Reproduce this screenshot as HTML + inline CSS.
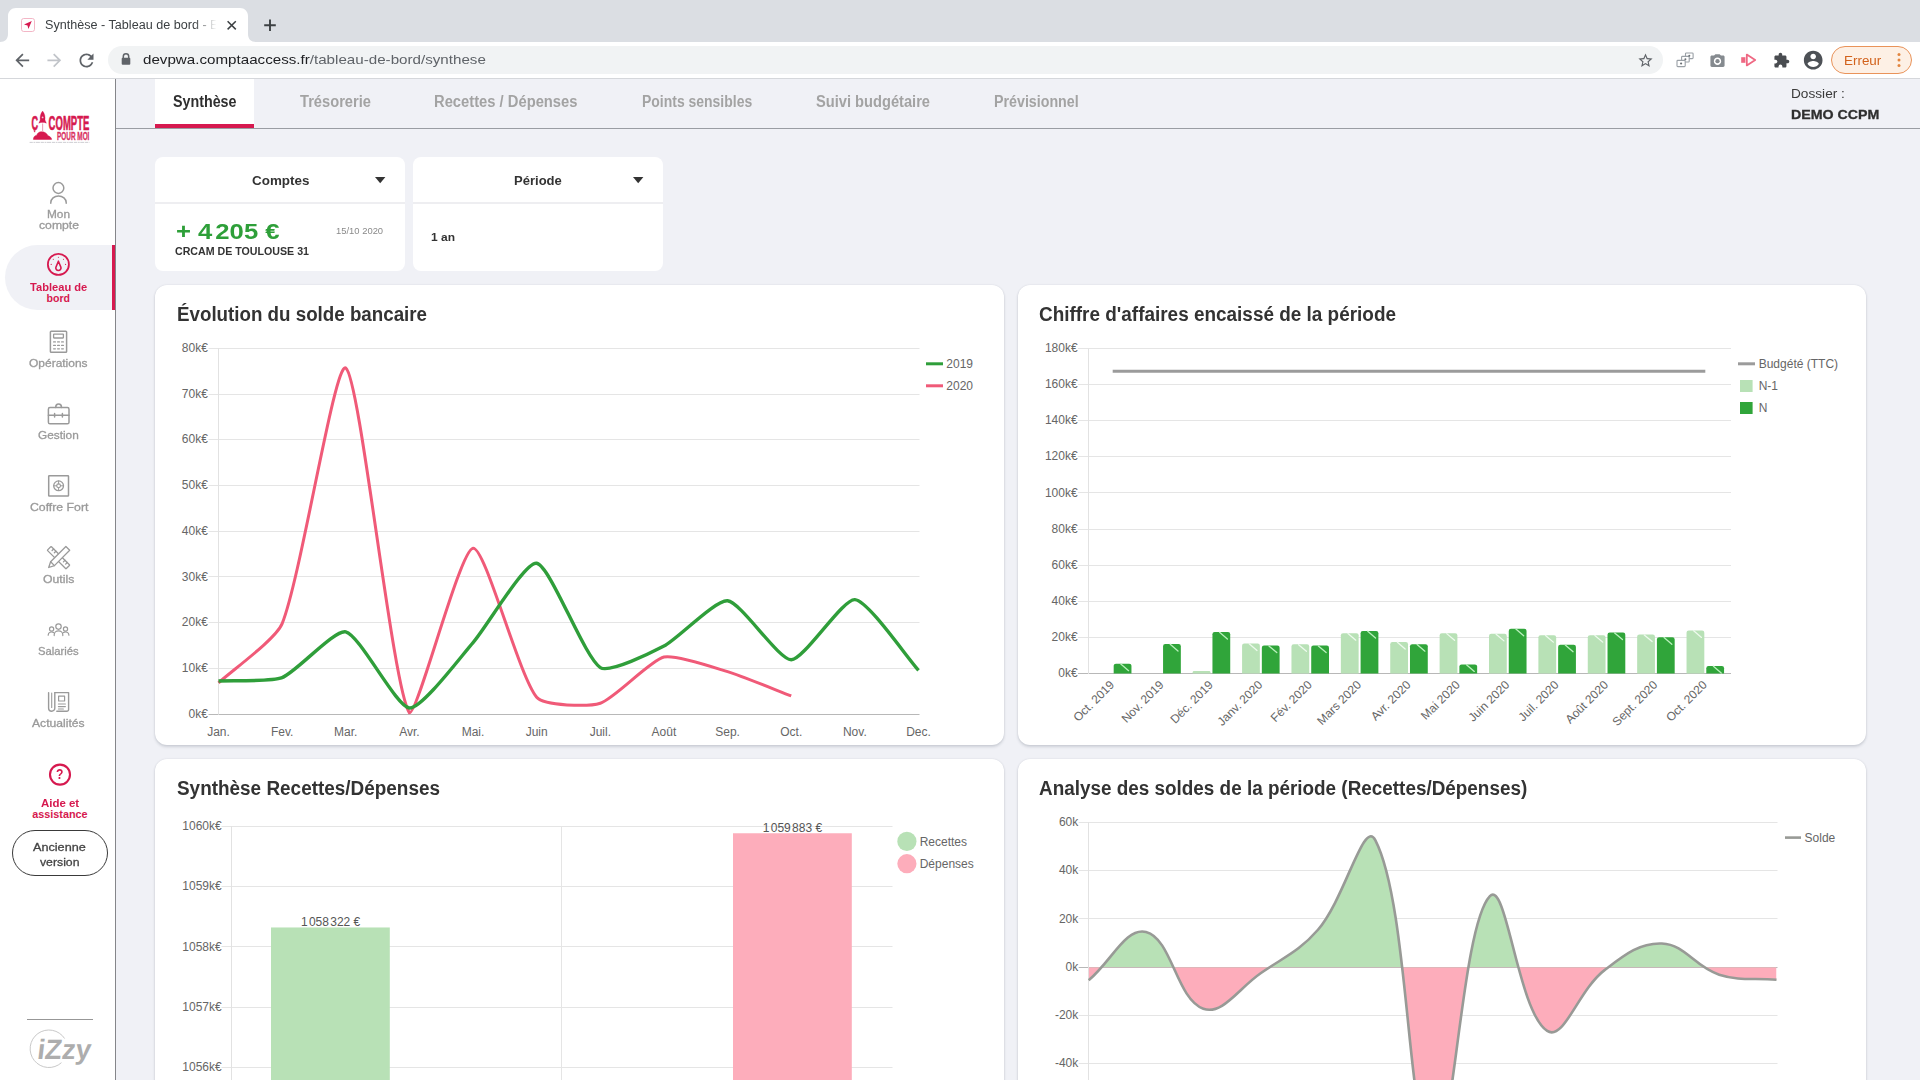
<!DOCTYPE html>
<html lang="fr"><head><meta charset="utf-8"><title>Synthèse - Tableau de bord</title>
<style>
*{box-sizing:border-box}
html,body{margin:0;padding:0}
body{width:1920px;height:1080px;overflow:hidden;position:relative;background:#f0f1f6;font-family:"Liberation Sans",sans-serif;color:#333}
.t{position:absolute;white-space:pre;transform-origin:0 50%}
.abs{position:absolute}
svg{position:absolute;overflow:visible}
.card{position:absolute;background:#fff;border-radius:12px;box-shadow:0 2px 3px rgba(40,50,70,.16),0 0 2px rgba(40,50,70,.12)}
.fcard{position:absolute;background:#fff;border-radius:8px}
</style></head>
<body>
<div class="abs" id="tabstrip" style="left:0;top:0;width:1920px;height:42px;background:#dbdee3"></div>
<div class="abs" id="toolbar" style="left:0;top:42px;width:1920px;height:36px;background:#fff"></div>
<div class="abs" style="left:0;top:78px;width:1920px;height:1px;background:#d5d7db"></div>
<svg style="left:0;top:0" width="260" height="42" viewBox="0 0 260 42"><path d="M0 42 C5 42 8 39 8 34 L8 16 C8 11.5 11.5 8 16 8 L240 8 C244.5 8 248 11.5 248 16 L248 34 C248 39 251 42 256 42 Z" fill="#fff"/></svg>
<svg style="left:21px;top:18px" width="14" height="14" viewBox="0 0 14 14"><rect x="0.5" y="0.5" width="13" height="13" rx="2.2" fill="#fff" stroke="#f3b6c6" stroke-width="1"/><path d="M10.8 3 L3 6.6 L6.5 7.4 L7.4 11 Z" fill="#d6194f"/></svg>
<div class="t" style="left:44.70px;top:17.04px;font-size:12px;line-height:16px;color:#3c4043;transform:scaleX(1.0501);-webkit-mask-image:linear-gradient(90deg,#000 86%,transparent 99%);mask-image:linear-gradient(90deg,#000 86%,transparent 99%);">Synthèse - Tableau de bord - E</div>
<svg style="left:0;top:0" width="300" height="42" viewBox="0 0 300 42"><path d="M227.6 21.2 L235.8 29.4 M235.8 21.2 L227.6 29.4" stroke="#3c4043" stroke-width="1.5" fill="none"/><path d="M264.2 25.2 H275.8 M270 19.4 V31" stroke="#3c4043" stroke-width="1.9" fill="none"/></svg>
<svg style="left:11.60px;top:49.70px" width="20.6" height="20.6" viewBox="0 0 24 24"><path d="M20 11H7.83l5.59-5.59L12 4l-8 8 8 8 1.41-1.41L7.83 13H20v-2z" fill="#5f6368"/></svg>
<svg style="left:43.90px;top:49.70px" width="20.6" height="20.6" viewBox="0 0 24 24"><path d="M12 4l-1.41 1.41L16.17 11H4v2h12.17l-5.58 5.59L12 20l8-8z" fill="#c1c4c9"/></svg>
<svg style="left:75.50px;top:49.50px" width="21" height="21" viewBox="0 0 24 24"><path d="M17.65 6.35C16.2 4.9 14.21 4 12 4c-4.42 0-7.99 3.58-7.99 8s3.57 8 7.99 8c3.73 0 6.84-2.55 7.73-6h-2.08c-.82 2.33-3.04 4-5.65 4-3.31 0-6-2.69-6-6s2.69-6 6-6c1.66 0 3.14.69 4.22 1.78L13 11h7V4l-2.35 2.35z" fill="#5f6368"/></svg>
<div class="abs" style="left:108px;top:46px;width:1555px;height:28px;border-radius:14px;background:#f1f3f4"></div>
<svg style="left:120px;top:52px" width="12" height="14" viewBox="0 0 12 14"><path d="M3.3 6 V4.4 A2.7 2.7 0 0 1 8.7 4.4 V6" fill="none" stroke="#5f6368" stroke-width="1.5"/><rect x="1.7" y="5.8" width="8.6" height="6.9" rx="1" fill="#5f6368"/></svg>
<div class="t" style="left:142.5px;top:50.12px;font-size:13.5px;line-height:19px;color:#202124;transform:scaleX(1.1224)">devpwa.comptaaccess.fr<span style="color:#5f6368">/tableau-de-bord/synthese</span></div>
<svg style="left:1636.50px;top:52.00px" width="17" height="17" viewBox="0 0 24 24"><path d="M22 9.24l-7.19-.62L12 2 9.19 8.63 2 9.24l5.46 4.73L5.82 21 12 17.27 18.18 21l-1.63-7.03L22 9.24zM12 15.4l-3.76 2.27 1-4.28-3.32-2.88 4.38-.38L12 6.1l1.71 4.04 4.38.38-3.32 2.88 1 4.28L12 15.4z" fill="#5f6368"/></svg>
<svg style="left:1676px;top:52px" width="18" height="17" viewBox="0 0 18 17"><g fill="#fff" stroke="#9aa0a6" stroke-width="1.1"><rect x="9.5" y="1" width="7.6" height="5.6" rx=".8"/><rect x="5.6" y="4.4" width="7.6" height="5.6" rx=".8"/><rect x="1" y="8.4" width="8.2" height="6.2" rx=".8"/></g><g fill="#6b7075"><circle cx="13.3" cy="3.8" r="1"/><circle cx="9.4" cy="7.2" r="1"/><circle cx="5.1" cy="11.5" r="1.1"/></g></svg>
<svg style="left:1708.5px;top:51.5px" width="17" height="17" viewBox="0 0 24 24"><path fill="#858a8f" d="M9 3L7.17 5H4c-1.1 0-2 .9-2 2v12c0 1.1.9 2 2 2h16c1.1 0 2-.9 2-2V7c0-1.1-.9-2-2-2h-3.17L15 3H9zm3 15.2c-2.87 0-5.2-2.33-5.2-5.2S9.13 7.8 12 7.8s5.200 2.330 5.200 5.200-2.330 5.200-5.200 5.200z"/><circle cx="12" cy="13" r="3" fill="#858a8f"/></svg>
<svg style="left:1740px;top:52px" width="18" height="16" viewBox="0 0 18 16"><rect x="1.2" y="5.2" width="4.2" height="5.6" fill="#ef6883"/><path d="M6.8 2.6 L15.2 8 L6.8 13.400 Z" fill="none" stroke="#ef6883" stroke-width="1.8" stroke-linejoin="round"/></svg>
<svg style="left:1772.50px;top:51.80px" width="17" height="17" viewBox="0 0 24 24"><path d="M20.5 11H19V7c0-1.1-.9-2-2-2h-4V3.500C13 2.120 11.880 1 10.500 1S8 2.120 8 3.500V5H4c-1.1 0-1.990.9-1.990 2v3.800H3.500c1.490 0 2.700 1.210 2.700 2.700s-1.210 2.700-2.700 2.700H2V20c0 1.100.9 2 2 2h3.800v-1.500c0-1.490 1.210-2.700 2.700-2.700 1.490 0 2.700 1.210 2.700 2.700V22H17c1.100 0 2-.9 2-2v-4h1.500c1.380 0 2.500-1.120 2.500-2.500S21.880 11 20.500 11z" fill="#494c50"/></svg>
<svg style="left:1801.80px;top:49.10px" width="22.4" height="22.4" viewBox="0 0 24 24"><path d="M12 2C6.48 2 2 6.48 2 12s4.48 10 10 10 10-4.48 10-10S17.52 2 12 2zm0 3c1.66 0 3 1.34 3 3s-1.34 3-3 3-3-1.34-3-3 1.34-3 3-3zm0 14.2c-2.5 0-4.71-1.28-6-3.22.03-1.99 4-3.08 6-3.08 1.99 0 5.97 1.09 6 3.08-1.29 1.94-3.500 3.220-6 3.220z" fill="#4d5156"/></svg>
<div class="abs" style="left:1831px;top:46px;width:81px;height:28px;border-radius:14px;background:#fdf0e5;border:1px solid #e9935a"></div>
<div class="t" style="left:1844.00px;top:52.00px;font-size:13px;line-height:17px;color:#d2621c;transform:scaleX(1.0326);">Erreur</div>
<svg style="left:1896px;top:51px" width="6" height="18" viewBox="0 0 6 18"><g fill="#e2853f"><circle cx="3" cy="3.4" r="1.5"/><circle cx="3" cy="9" r="1.5"/><circle cx="3" cy="14.6" r="1.5"/></g></svg>
<div class="abs" id="sidebar" style="left:0;top:79px;width:116px;height:1001px;background:#fff;border-right:1px solid #85868a"></div>
<div class="abs" style="left:5px;top:245px;width:110px;height:65px;border-radius:32.5px 0 0 32.5px;background:#f0f1f6"></div>
<div class="abs" style="left:112px;top:245px;width:3.4px;height:65px;background:#d6194f"></div>
<svg style="left:0;top:0" width="116" height="1080" viewBox="0 0 116 1080"><g fill="none" stroke="#9a9a9a" stroke-width="1.5" stroke-linecap="round" stroke-linejoin="round"><circle cx="58.4" cy="188" r="5.4"/><path d="M50.8 203.2 V202.6 A7.7 6.6 0 0 1 66.2 202.6 V203.2"/><rect x="50.4" y="331.2" width="16.2" height="21" rx="0.8"/><rect x="53.6" y="334.2" width="9.8" height="3.8" rx="0.4" stroke-width="1.3"/><path d="M53.6 341.9 h1.8" stroke-width="1.3"/><path d="M57.6 341.9 h1.8" stroke-width="1.3"/><path d="M61.6 341.9 h1.8" stroke-width="1.3"/><path d="M53.6 345.4 h1.8" stroke-width="1.3"/><path d="M57.6 345.4 h1.8" stroke-width="1.3"/><path d="M61.6 345.4 h1.8" stroke-width="1.3"/><path d="M53.6 348.8 h1.8" stroke-width="1.3"/><path d="M57.6 348.8 h1.8" stroke-width="1.3"/><path d="M61.6 348.8 h1.8" stroke-width="1.3"/><rect x="48.4" y="407.6" width="20.6" height="16.2" rx="1.6"/><path d="M55.7 407.4 A2.9 3.3 0 0 1 61.5 407.4"/><path d="M48.4 415.2 H69"/><path d="M54.6 413.4 V417 M62.4 413.4 V417"/><rect x="48.7" y="475.7" width="19.8" height="20.4" rx="0.6"/><circle cx="58.6" cy="485.8" r="4.9" stroke-width="1.3"/><circle cx="58.6" cy="485.8" r="1.9" stroke-width="1.1"/><path d="M58.6 481 v2.9 M58.6 487.7 v2.9 M53.8 485.8 h2.9 M60.5 485.8 h2.9" stroke-width="1"/><g transform="rotate(45 58.6 557.6)" stroke-width="1.3"><rect x="45.4" y="555" width="26.4" height="5.4" rx="0.5"/><path d="M49 555 v2.2 M52.2 555 v2.2 M65 555 v2.2 M68.2 555 v2.2"/></g><g transform="rotate(-45 58.6 557.6)" stroke-width="1.3"><path d="M50 554.9 H71.6 V560.3 H50 L44.6 557.6 Z" fill="#fff"/><path d="M50 554.9 V560.3"/></g><g stroke-width="1.2"><circle cx="58.5" cy="626.6" r="2.7"/><path d="M54.2 635.6 V634.8 A4.3 4 0 0 1 62.800 634.8 V635.6"/><circle cx="51.6" cy="628.9" r="2.1"/><path d="M48.2 635.2 V634.9 A3.3 3 0 0 1 53.6 632.6"/><circle cx="65.5" cy="628.9" r="2.1"/><path d="M68.9 635.2 V634.9 A3.3 3 0 0 0 63.500 632.6"/></g><g stroke-width="1.4"><path d="M54.8 692.6 H68.6 V709.4 A1.8 1.8 0 0 1 66.8 711.2 H56.8"/><path d="M48.6 692.6 V708.2 A3.1 3 0 0 0 54.8 708.2 V692.6" /><path d="M51.7 693 V707.4" stroke-width="1.1"/><rect x="58.6" y="696.2" width="6" height="4.8" stroke-width="1.2"/><path d="M58.4 704 H65.4 M58.4 706.6 H65.4 M58.4 709 H63.4" stroke-width="1.1"/></g></g><g fill="none" stroke="#d6194f" stroke-linecap="round" stroke-linejoin="round"><circle cx="58.4" cy="264.4" r="10.5" stroke-width="1.8"/><path d="M58.4 261.2 L60.9 267.2 A2.6 2.6 0 1 1 55.9 267.2 Z" stroke-width="1.6"/><circle cx="51.20" cy="264.40" r="0.55" fill="#d6194f" stroke="none"/><circle cx="53.31" cy="259.31" r="0.55" fill="#d6194f" stroke="none"/><circle cx="58.40" cy="257.20" r="0.55" fill="#d6194f" stroke="none"/><circle cx="63.49" cy="259.31" r="0.55" fill="#d6194f" stroke="none"/><circle cx="65.60" cy="264.40" r="0.55" fill="#d6194f" stroke="none"/></g><circle cx="60" cy="774.6" r="10" fill="none" stroke="#d6194f" stroke-width="2.1"/></svg>
<div class="t" style="left:56.30px;top:765.25px;font-size:14px;line-height:19px;color:#d6194f;font-weight:bold;transform:scaleX(0.8653);">?</div>
<div class="t" style="left:47.10px;top:207.09px;font-size:11px;line-height:15px;color:#9a9a9a;transform:scaleX(1.0748);-webkit-text-stroke:0.3px #9a9a9a;">Mon</div>
<div class="t" style="left:38.60px;top:217.99px;font-size:11px;line-height:15px;color:#9a9a9a;transform:scaleX(1.1089);-webkit-text-stroke:0.3px #9a9a9a;">compte</div>
<div class="t" style="left:29.85px;top:279.63px;font-size:10.6px;line-height:14px;color:#d6194f;font-weight:bold;transform:scaleX(1.0497);">Tableau de</div>
<div class="t" style="left:46.55px;top:290.73px;font-size:10.6px;line-height:14px;color:#d6194f;font-weight:bold;">bord</div>
<div class="t" style="left:29.40px;top:356.29px;font-size:11px;line-height:15px;color:#9a9a9a;transform:scaleX(1.0890);-webkit-text-stroke:0.3px #9a9a9a;">Opérations</div>
<div class="t" style="left:38.25px;top:428.09px;font-size:11px;line-height:15px;color:#9a9a9a;transform:scaleX(1.0736);-webkit-text-stroke:0.3px #9a9a9a;">Gestion</div>
<div class="t" style="left:29.60px;top:500.29px;font-size:11px;line-height:15px;color:#9a9a9a;transform:scaleX(1.1152);-webkit-text-stroke:0.3px #9a9a9a;">Coffre Fort</div>
<div class="t" style="left:42.85px;top:571.89px;font-size:11px;line-height:15px;color:#9a9a9a;transform:scaleX(1.1132);-webkit-text-stroke:0.3px #9a9a9a;">Outils</div>
<div class="t" style="left:38.25px;top:644.09px;font-size:11px;line-height:15px;color:#9a9a9a;transform:scaleX(1.0241);-webkit-text-stroke:0.3px #9a9a9a;">Salariés</div>
<div class="t" style="left:32.40px;top:716.09px;font-size:11px;line-height:15px;color:#9a9a9a;transform:scaleX(1.1029);-webkit-text-stroke:0.3px #9a9a9a;">Actualités</div>
<div class="t" style="left:40.80px;top:796.26px;font-size:10.8px;line-height:15px;color:#d6194f;font-weight:bold;transform:scaleX(1.0609);">Aide et</div>
<div class="t" style="left:32.35px;top:807.26px;font-size:10.8px;line-height:15px;color:#d6194f;font-weight:bold;">assistance</div>
<div class="abs" style="left:12px;top:830px;width:96px;height:46px;border-radius:23px;border:1px solid #3a3a3a;background:#fff"></div>
<div class="t" style="left:33.40px;top:838.61px;font-size:11.8px;line-height:16px;color:#444;transform:scaleX(1.0730);-webkit-text-stroke:0.3px #444;">Ancienne</div>
<div class="t" style="left:40.15px;top:853.51px;font-size:11.8px;line-height:16px;color:#444;transform:scaleX(1.0384);-webkit-text-stroke:0.3px #444;">version</div>
<div class="abs" style="left:27px;top:1019px;width:66px;height:1px;background:#979797"></div>
<svg style="left:0;top:0" width="116" height="160" viewBox="0 0 116 160"><g fill="#d6194f" stroke="#d6194f" stroke-width="0.55" stroke-linejoin="round"><text x="31.6" y="130" font-family="Liberation Sans" font-weight="bold" font-size="19.5" textLength="6.6" lengthAdjust="spacingAndGlyphs">C</text><path d="M33.8 130.6 l1.4 0 l-0.5 1.6 z"/><text x="48.6" y="129.8" font-family="Liberation Sans" font-weight="bold" font-size="19.3" textLength="40.8" lengthAdjust="spacingAndGlyphs">COMPTE</text><text x="57" y="139.8" font-family="Liberation Sans" font-weight="bold" font-size="11.4" textLength="32.4" lengthAdjust="spacingAndGlyphs" fill="#d92f60" stroke="#d92f60" stroke-width="0.3">POUR MOI</text><path d="M42.6 111 C44.8 113.6 45.4 117 45 120 L46.4 123.2 L44.2 122.4 L41 122.4 L38.8 123.2 L40.200 120 C39.800 117 40.400 113.600 42.600 111 Z" stroke-width="0.3"/><circle cx="42.6" cy="117.4" r="0.9" fill="#f4c4d1" stroke="none"/><path d="M33.400 139.400 C33.400 137 35 135.400 36.800 135.200 C37.400 133 39.400 131.600 41.600 131.800 C44.400 131.600 47 133.400 48 135.800 C50 136.400 51.600 137.800 51.600 139.400 Z"/></g><path d="M42.6 123.6 V131.6" stroke="#e9a5b8" stroke-width="1.1"/><path d="M29.6 142.4 H89.4" stroke="#c3c3c8" stroke-width="0.8" stroke-dasharray="3.2 0.7 1.8 0.6 4 0.8"/></svg>
<svg style="left:0;top:1020px" width="116" height="60" viewBox="0 1020 116 60"><path d="M64.62 1038.54 A18.75 18.75 0 1 0 61.45 1062.68" fill="none" stroke="#c2c2c2" stroke-width="0.9"/><text x="36.4" y="1058.8" font-family="Liberation Sans" font-weight="bold" font-size="28" transform="skewX(-7) translate(130 0)" textLength="53.6" lengthAdjust="spacingAndGlyphs" fill="#adadad">iZzy</text></svg>
<div class="abs" id="topnav" style="left:116px;top:79px;width:1804px;height:50px;border-bottom:1px solid #9a9da3"></div>
<div class="abs" style="left:155px;top:79px;width:99px;height:45px;background:#fff"></div>
<div class="abs" style="left:155px;top:124px;width:99px;height:4.4px;background:#d6194f"></div>
<div class="t" style="left:172.50px;top:91.23px;font-size:15.8px;line-height:21px;color:#2f2f2f;font-weight:bold;transform:scaleX(0.9039);">Synthèse</div>
<div class="t" style="left:299.50px;top:91.23px;font-size:15.8px;line-height:21px;color:#a3a3a3;font-weight:bold;transform:scaleX(0.9291);">Trésorerie</div>
<div class="t" style="left:434.00px;top:91.23px;font-size:15.8px;line-height:21px;color:#a3a3a3;font-weight:bold;transform:scaleX(0.9337);">Recettes / Dépenses</div>
<div class="t" style="left:641.80px;top:91.23px;font-size:15.8px;line-height:21px;color:#a3a3a3;font-weight:bold;transform:scaleX(0.8838);">Points sensibles</div>
<div class="t" style="left:816.00px;top:91.23px;font-size:15.8px;line-height:21px;color:#a3a3a3;font-weight:bold;transform:scaleX(0.9275);">Suivi budgétaire</div>
<div class="t" style="left:994.00px;top:91.23px;font-size:15.8px;line-height:21px;color:#a3a3a3;font-weight:bold;transform:scaleX(0.9014);">Prévisionnel</div>
<div class="t" style="left:1790.80px;top:85.16px;font-size:13.4px;line-height:18px;color:#3a3a3a;transform:scaleX(1.0195);">Dossier :</div>
<div class="t" style="left:1790.80px;top:105.96px;font-size:12.8px;line-height:17px;color:#2f2f2f;font-weight:bold;transform:scaleX(1.1099);-webkit-text-stroke:0.3px #2f2f2f;">DEMO CCPM</div>
<div class="fcard" style="left:155px;top:156.5px;width:250px;height:114.5px"></div>
<div class="abs" style="left:155px;top:202.2px;width:250px;height:2px;background:#eeeef1"></div>
<div class="t" style="left:251.50px;top:171.66px;font-size:12.8px;line-height:17px;color:#333;font-weight:bold;transform:scaleX(1.0481);">Comptes</div>
<svg style="left:374.8px;top:177px" width="10.4" height="6.2" viewBox="0 0 10.4 6.2"><path d="M0 0 H10.4 L5.2 6.2 Z" fill="#333"/></svg>
<div class="t" style="left:175.7px;top:216.54px;font-size:22.4px;line-height:30px;color:#2e9f39;font-weight:bold;transform:scaleX(1.1458)">+ 4<span style="display:inline-block;width:2.6px"></span>205 €</div>
<div class="t" style="left:336.30px;top:225.08px;font-size:9px;line-height:12px;color:#8a8a8a;transform:scaleX(1.0456);">15/10 2020</div>
<div class="t" style="left:175.30px;top:245.03px;font-size:10.3px;line-height:14px;color:#333;font-weight:bold;transform:scaleX(1.0330);">CRCAM DE TOULOUSE 31</div>
<div class="fcard" style="left:413px;top:156.5px;width:250px;height:114.5px"></div>
<div class="abs" style="left:413px;top:202.2px;width:250px;height:2px;background:#eeeef1"></div>
<div class="t" style="left:513.90px;top:171.66px;font-size:12.8px;line-height:17px;color:#333;font-weight:bold;transform:scaleX(1.0181);">Période</div>
<svg style="left:632.6px;top:177px" width="10.4" height="6.2" viewBox="0 0 10.4 6.2"><path d="M0 0 H10.4 L5.2 6.2 Z" fill="#333"/></svg>
<div class="t" style="left:430.90px;top:228.78px;font-size:11.6px;line-height:16px;color:#333;font-weight:bold;transform:scaleX(1.0340);">1 an</div>
<div class="card" style="left:155px;top:285px;width:849px;height:460px"></div>
<div class="card" style="left:1018px;top:285px;width:848px;height:460px"></div>
<div class="card" style="left:155px;top:758.5px;width:849px;height:460px"></div>
<div class="card" style="left:1018px;top:758.5px;width:848px;height:460px"></div>
<div class="t" style="left:176.70px;top:301.17px;font-size:20px;line-height:26px;color:#333;font-weight:bold;transform:scaleX(0.9373);">Évolution du solde bancaire</div>
<div class="t" style="left:1039.20px;top:301.17px;font-size:20px;line-height:26px;color:#333;font-weight:bold;transform:scaleX(0.9466);">Chiffre d'affaires encaissé de la période</div>
<div class="t" style="left:176.50px;top:775.27px;font-size:20px;line-height:26px;color:#333;font-weight:bold;transform:scaleX(0.9463);">Synthèse Recettes/Dépenses</div>
<div class="t" style="left:1039.00px;top:775.27px;font-size:20px;line-height:26px;color:#333;font-weight:bold;transform:scaleX(0.9445);">Analyse des soldes de la période (Recettes/Dépenses)</div>
<svg id="charts" style="left:0;top:0" width="1920" height="1080" viewBox="0 0 1920 1080" font-family="Liberation Sans, sans-serif"><path d="M208.50 348.50 H919.50" stroke="#e5e5e5" stroke-width="1"/><text x="207.90" y="351.90" text-anchor="end" font-size="12" fill="#666" >80k€</text><path d="M208.50 394.50 H919.50" stroke="#e5e5e5" stroke-width="1"/><text x="207.90" y="397.64" text-anchor="end" font-size="12" fill="#666" >70k€</text><path d="M208.50 439.50 H919.50" stroke="#e5e5e5" stroke-width="1"/><text x="207.90" y="443.38" text-anchor="end" font-size="12" fill="#666" >60k€</text><path d="M208.50 485.50 H919.50" stroke="#e5e5e5" stroke-width="1"/><text x="207.90" y="489.11" text-anchor="end" font-size="12" fill="#666" >50k€</text><path d="M208.50 531.50 H919.50" stroke="#e5e5e5" stroke-width="1"/><text x="207.90" y="534.85" text-anchor="end" font-size="12" fill="#666" >40k€</text><path d="M208.50 576.50 H919.50" stroke="#e5e5e5" stroke-width="1"/><text x="207.90" y="580.59" text-anchor="end" font-size="12" fill="#666" >30k€</text><path d="M208.50 622.50 H919.50" stroke="#e5e5e5" stroke-width="1"/><text x="207.90" y="626.33" text-anchor="end" font-size="12" fill="#666" >20k€</text><path d="M208.50 668.50 H919.50" stroke="#e5e5e5" stroke-width="1"/><text x="207.90" y="672.06" text-anchor="end" font-size="12" fill="#666" >10k€</text><path d="M208.50 714.50 H919.50" stroke="#b8b8b8" stroke-width="1"/><text x="207.90" y="717.80" text-anchor="end" font-size="12" fill="#666" >0k€</text><path d="M218.50 348.30 V714.70" stroke="#e2e2e2" stroke-width="1"/><text x="218.50" y="736.00" text-anchor="middle" font-size="12" fill="#666" >Jan.</text><text x="282.14" y="736.00" text-anchor="middle" font-size="12" fill="#666" >Fev.</text><text x="345.77" y="736.00" text-anchor="middle" font-size="12" fill="#666" >Mar.</text><text x="409.41" y="736.00" text-anchor="middle" font-size="12" fill="#666" >Avr.</text><text x="473.05" y="736.00" text-anchor="middle" font-size="12" fill="#666" >Mai.</text><text x="536.68" y="736.00" text-anchor="middle" font-size="12" fill="#666" >Juin</text><text x="600.32" y="736.00" text-anchor="middle" font-size="12" fill="#666" >Juil.</text><text x="663.95" y="736.00" text-anchor="middle" font-size="12" fill="#666" >Août</text><text x="727.59" y="736.00" text-anchor="middle" font-size="12" fill="#666" >Sep.</text><text x="791.23" y="736.00" text-anchor="middle" font-size="12" fill="#666" >Oct.</text><text x="854.86" y="736.00" text-anchor="middle" font-size="12" fill="#666" >Nov.</text><text x="918.50" y="736.00" text-anchor="middle" font-size="12" fill="#666" >Dec.</text><path d="M218.50 682.87 C231.23 671.02 275.82 639.27 282.14 623.64 C301.28 576.28 334.85 360.31 345.77 367.97 C360.31 378.15 392.48 688.85 409.41 712.83 C417.93 714.20 459.78 549.79 473.05 548.17 C485.23 546.68 518.42 675.04 536.68 697.28 C543.88 706.05 588.91 706.83 600.32 703.22 C614.36 698.78 650.05 660.48 663.95 657.03 C675.50 654.16 715.13 667.86 727.59 671.66 C740.59 675.63 778.50 691.06 791.23 695.91" fill="none" stroke="#f05a78" stroke-width="3" stroke-linejoin="round"/><path d="M218.50 680.95 C231.23 680.28 270.72 682.01 282.14 677.61 C296.18 672.20 334.54 629.19 345.77 631.87 C360.00 635.27 396.15 706.91 409.41 708.03 C421.60 709.06 461.01 656.31 473.05 642.62 C486.46 627.36 525.12 561.00 536.68 563.27 C550.57 565.99 583.89 656.86 600.32 667.55 C609.35 673.42 652.19 652.23 663.95 646.05 C677.64 638.87 715.53 599.47 727.59 600.77 C740.99 602.22 778.56 659.89 791.23 659.77 C804.01 659.66 842.66 598.62 854.86 599.63 C868.12 600.72 905.77 656.16 918.50 670.29" fill="none" stroke="#2f9e3a" stroke-width="3.4" stroke-linejoin="round"/><path d="M926 363.8 H943" stroke="#2f9e3a" stroke-width="3"/><text x="946.30" y="368.00" text-anchor="start" font-size="12" fill="#666" >2019</text><path d="M926 385.8 H943" stroke="#f05a78" stroke-width="3"/><text x="946.30" y="390.00" text-anchor="start" font-size="12" fill="#666" >2020</text><path d="M1078.00 348.50 H1731.00" stroke="#e5e5e5" stroke-width="1"/><text x="1077.60" y="352.10" text-anchor="end" font-size="12" fill="#666" >180k€</text><path d="M1078.00 384.50 H1731.00" stroke="#e5e5e5" stroke-width="1"/><text x="1077.60" y="388.22" text-anchor="end" font-size="12" fill="#666" >160k€</text><path d="M1078.00 420.50 H1731.00" stroke="#e5e5e5" stroke-width="1"/><text x="1077.60" y="424.34" text-anchor="end" font-size="12" fill="#666" >140k€</text><path d="M1078.00 456.50 H1731.00" stroke="#e5e5e5" stroke-width="1"/><text x="1077.60" y="460.47" text-anchor="end" font-size="12" fill="#666" >120k€</text><path d="M1078.00 492.50 H1731.00" stroke="#e5e5e5" stroke-width="1"/><text x="1077.60" y="496.59" text-anchor="end" font-size="12" fill="#666" >100k€</text><path d="M1078.00 529.50 H1731.00" stroke="#e5e5e5" stroke-width="1"/><text x="1077.60" y="532.71" text-anchor="end" font-size="12" fill="#666" >80k€</text><path d="M1078.00 565.50 H1731.00" stroke="#e5e5e5" stroke-width="1"/><text x="1077.60" y="568.83" text-anchor="end" font-size="12" fill="#666" >60k€</text><path d="M1078.00 601.50 H1731.00" stroke="#e5e5e5" stroke-width="1"/><text x="1077.60" y="604.96" text-anchor="end" font-size="12" fill="#666" >40k€</text><path d="M1078.00 637.50 H1731.00" stroke="#e5e5e5" stroke-width="1"/><text x="1077.60" y="641.08" text-anchor="end" font-size="12" fill="#666" >20k€</text><path d="M1078.00 673.50 H1731.00" stroke="#b8b8b8" stroke-width="1"/><text x="1077.60" y="677.20" text-anchor="end" font-size="12" fill="#666" >0k€</text><path d="M1088.50 348.50 V674.10" stroke="#e2e2e2" stroke-width="1"/><path d="M1113.68 673.60 V665.87 Q1113.68 663.67 1115.88 663.67 H1129.26 Q1131.46 663.67 1131.46 665.87 V673.60 Z" fill="#30a53a"/><path d="M1120.79 663.97 L1128.61 670.67" stroke="#baf0bd" stroke-width="1.3" stroke-linecap="round"/><text transform="translate(1112.09 682.60) rotate(-45)" text-anchor="end" font-size="12" fill="#666" dy="4.2">Oct. 2019</text><path d="M1163.06 673.60 V646.18 Q1163.06 643.98 1165.26 643.98 H1178.64 Q1180.84 643.98 1180.84 646.18 V673.60 Z" fill="#30a53a"/><path d="M1170.18 644.28 L1178.00 650.98" stroke="#baf0bd" stroke-width="1.3" stroke-linecap="round"/><text transform="translate(1161.48 682.60) rotate(-45)" text-anchor="end" font-size="12" fill="#666" dy="4.2">Nov. 2019</text><path d="M1192.70 673.60 V672.34 Q1192.70 671.07 1193.96 671.07 H1209.21 Q1210.47 671.07 1210.47 672.34 V673.60 Z" fill="#b8e1b6"/><path d="M1212.45 673.60 V634.26 Q1212.45 632.06 1214.65 632.06 H1228.03 Q1230.23 632.06 1230.23 634.26 V673.60 Z" fill="#30a53a"/><path d="M1219.56 632.36 L1227.38 639.06" stroke="#baf0bd" stroke-width="1.3" stroke-linecap="round"/><text transform="translate(1210.86 682.60) rotate(-45)" text-anchor="end" font-size="12" fill="#666" dy="4.2">Déc. 2019</text><path d="M1242.08 673.60 V645.64 Q1242.08 643.44 1244.28 643.44 H1257.66 Q1259.86 643.44 1259.86 645.64 V673.60 Z" fill="#b8e1b6"/><path d="M1249.19 643.74 L1257.01 650.44" stroke="#eefaee" stroke-width="1.3" stroke-linecap="round"/><path d="M1261.83 673.60 V647.81 Q1261.83 645.61 1264.03 645.61 H1277.41 Q1279.61 645.61 1279.61 647.81 V673.60 Z" fill="#30a53a"/><path d="M1268.95 645.91 L1276.77 652.61" stroke="#baf0bd" stroke-width="1.3" stroke-linecap="round"/><text transform="translate(1260.25 682.60) rotate(-45)" text-anchor="end" font-size="12" fill="#666" dy="4.2">Janv. 2020</text><path d="M1291.46 673.60 V646.54 Q1291.46 644.34 1293.66 644.34 H1307.04 Q1309.24 644.34 1309.24 646.54 V673.60 Z" fill="#b8e1b6"/><path d="M1298.58 644.64 L1306.40 651.34" stroke="#eefaee" stroke-width="1.3" stroke-linecap="round"/><path d="M1311.22 673.60 V647.81 Q1311.22 645.61 1313.42 645.61 H1326.80 Q1329.00 645.61 1329.00 647.81 V673.60 Z" fill="#30a53a"/><path d="M1318.33 645.91 L1326.15 652.61" stroke="#baf0bd" stroke-width="1.3" stroke-linecap="round"/><text transform="translate(1309.63 682.60) rotate(-45)" text-anchor="end" font-size="12" fill="#666" dy="4.2">Fév. 2020</text><path d="M1340.85 673.60 V635.34 Q1340.85 633.14 1343.05 633.14 H1356.43 Q1358.63 633.14 1358.63 635.34 V673.60 Z" fill="#b8e1b6"/><path d="M1347.96 633.44 L1355.78 640.14" stroke="#eefaee" stroke-width="1.3" stroke-linecap="round"/><path d="M1360.60 673.60 V633.18 Q1360.60 630.98 1362.80 630.98 H1376.18 Q1378.38 630.98 1378.38 633.18 V673.60 Z" fill="#30a53a"/><path d="M1367.71 631.28 L1375.54 637.98" stroke="#baf0bd" stroke-width="1.3" stroke-linecap="round"/><text transform="translate(1359.02 682.60) rotate(-45)" text-anchor="end" font-size="12" fill="#666" dy="4.2">Mars 2020</text><path d="M1390.23 673.60 V644.19 Q1390.23 641.99 1392.43 641.99 H1405.81 Q1408.01 641.99 1408.01 644.19 V673.60 Z" fill="#b8e1b6"/><path d="M1397.35 642.29 L1405.17 648.99" stroke="#eefaee" stroke-width="1.3" stroke-linecap="round"/><path d="M1409.99 673.60 V646.36 Q1409.99 644.16 1412.19 644.16 H1425.57 Q1427.77 644.16 1427.77 646.36 V673.60 Z" fill="#30a53a"/><path d="M1417.10 644.46 L1424.92 651.16" stroke="#baf0bd" stroke-width="1.3" stroke-linecap="round"/><text transform="translate(1408.40 682.60) rotate(-45)" text-anchor="end" font-size="12" fill="#666" dy="4.2">Avr. 2020</text><path d="M1439.62 673.60 V635.52 Q1439.62 633.32 1441.82 633.32 H1455.20 Q1457.40 633.32 1457.40 635.52 V673.60 Z" fill="#b8e1b6"/><path d="M1446.73 633.62 L1454.55 640.32" stroke="#eefaee" stroke-width="1.3" stroke-linecap="round"/><path d="M1459.37 673.60 V666.59 Q1459.37 664.39 1461.57 664.39 H1474.95 Q1477.15 664.39 1477.15 666.59 V673.60 Z" fill="#30a53a"/><path d="M1466.48 664.69 L1474.31 671.39" stroke="#baf0bd" stroke-width="1.3" stroke-linecap="round"/><text transform="translate(1457.78 682.60) rotate(-45)" text-anchor="end" font-size="12" fill="#666" dy="4.2">Mai 2020</text><path d="M1489.00 673.60 V636.07 Q1489.00 633.87 1491.20 633.87 H1504.58 Q1506.78 633.87 1506.78 636.07 V673.60 Z" fill="#b8e1b6"/><path d="M1496.11 634.17 L1503.94 640.87" stroke="#eefaee" stroke-width="1.3" stroke-linecap="round"/><path d="M1508.76 673.60 V631.01 Q1508.76 628.81 1510.96 628.81 H1524.34 Q1526.54 628.81 1526.54 631.01 V673.60 Z" fill="#30a53a"/><path d="M1515.87 629.11 L1523.69 635.81" stroke="#baf0bd" stroke-width="1.3" stroke-linecap="round"/><text transform="translate(1507.17 682.60) rotate(-45)" text-anchor="end" font-size="12" fill="#666" dy="4.2">Juin 2020</text><path d="M1538.39 673.60 V637.33 Q1538.39 635.13 1540.59 635.13 H1553.97 Q1556.17 635.13 1556.17 637.33 V673.60 Z" fill="#b8e1b6"/><path d="M1545.50 635.43 L1553.32 642.13" stroke="#eefaee" stroke-width="1.3" stroke-linecap="round"/><path d="M1558.14 673.60 V646.90 Q1558.14 644.70 1560.34 644.70 H1573.72 Q1575.92 644.70 1575.92 646.90 V673.60 Z" fill="#30a53a"/><path d="M1565.25 645.00 L1573.08 651.70" stroke="#baf0bd" stroke-width="1.3" stroke-linecap="round"/><text transform="translate(1556.55 682.60) rotate(-45)" text-anchor="end" font-size="12" fill="#666" dy="4.2">Juil. 2020</text><path d="M1587.77 673.60 V637.33 Q1587.77 635.13 1589.97 635.13 H1603.35 Q1605.55 635.13 1605.55 637.33 V673.60 Z" fill="#b8e1b6"/><path d="M1594.88 635.43 L1602.71 642.13" stroke="#eefaee" stroke-width="1.3" stroke-linecap="round"/><path d="M1607.53 673.60 V634.80 Q1607.53 632.60 1609.73 632.60 H1623.10 Q1625.30 632.60 1625.30 634.80 V673.60 Z" fill="#30a53a"/><path d="M1614.64 632.90 L1622.46 639.60" stroke="#baf0bd" stroke-width="1.3" stroke-linecap="round"/><text transform="translate(1605.94 682.60) rotate(-45)" text-anchor="end" font-size="12" fill="#666" dy="4.2">Août 2020</text><path d="M1637.16 673.60 V636.79 Q1637.16 634.59 1639.36 634.59 H1652.74 Q1654.94 634.59 1654.94 636.79 V673.60 Z" fill="#b8e1b6"/><path d="M1644.27 634.89 L1652.09 641.59" stroke="#eefaee" stroke-width="1.3" stroke-linecap="round"/><path d="M1656.91 673.60 V639.50 Q1656.91 637.30 1659.11 637.30 H1672.49 Q1674.69 637.30 1674.69 639.50 V673.60 Z" fill="#30a53a"/><path d="M1664.02 637.60 L1671.84 644.30" stroke="#baf0bd" stroke-width="1.3" stroke-linecap="round"/><text transform="translate(1655.32 682.60) rotate(-45)" text-anchor="end" font-size="12" fill="#666" dy="4.2">Sept. 2020</text><path d="M1686.54 673.60 V632.63 Q1686.54 630.43 1688.74 630.43 H1702.12 Q1704.32 630.43 1704.32 632.63 V673.60 Z" fill="#b8e1b6"/><path d="M1693.65 630.73 L1701.48 637.43" stroke="#eefaee" stroke-width="1.3" stroke-linecap="round"/><path d="M1706.30 673.60 V668.21 Q1706.30 666.01 1708.50 666.01 H1721.87 Q1724.07 666.01 1724.07 668.21 V673.60 Z" fill="#30a53a"/><path d="M1713.41 666.31 L1721.23 673.01" stroke="#baf0bd" stroke-width="1.3" stroke-linecap="round"/><text transform="translate(1704.71 682.60) rotate(-45)" text-anchor="end" font-size="12" fill="#666" dy="4.2">Oct. 2020</text><path d="M1112.69 371.26 H1705.31" stroke="#9b9b9b" stroke-width="3"/><path d="M1738 363.8 H1755" stroke="#9b9b9b" stroke-width="3"/><text x="1758.70" y="368.00" text-anchor="start" font-size="12" fill="#666" >Budgété (TTC)</text><rect x="1740" y="380" width="12.6" height="12" fill="#b8e1b6"/><text x="1758.70" y="390.00" text-anchor="start" font-size="12" fill="#666" >N-1</text><rect x="1740" y="402" width="12.6" height="12" fill="#30a53a"/><text x="1758.70" y="412.00" text-anchor="start" font-size="12" fill="#666" >N</text><path d="M221.50 826.50 H892.50" stroke="#e5e5e5" stroke-width="1"/><text x="221.70" y="829.80" text-anchor="end" font-size="12" fill="#666" >1060k€</text><path d="M221.50 886.50 H892.50" stroke="#e5e5e5" stroke-width="1"/><text x="221.70" y="890.15" text-anchor="end" font-size="12" fill="#666" >1059k€</text><path d="M221.50 946.50 H892.50" stroke="#e5e5e5" stroke-width="1"/><text x="221.70" y="950.50" text-anchor="end" font-size="12" fill="#666" >1058k€</text><path d="M221.50 1007.50 H892.50" stroke="#e5e5e5" stroke-width="1"/><text x="221.70" y="1010.85" text-anchor="end" font-size="12" fill="#666" >1057k€</text><path d="M221.50 1067.50 H892.50" stroke="#e5e5e5" stroke-width="1"/><text x="221.70" y="1071.20" text-anchor="end" font-size="12" fill="#666" >1056k€</text><path d="M231.50 826.20 V1085.00" stroke="#e2e2e2" stroke-width="1"/><path d="M561.50 826.20 V1085.00" stroke="#e5e5e5" stroke-width="1"/><rect x="271" y="927.47" width="118.8" height="200" fill="#b8e1b6"/><rect x="733" y="833.26" width="118.8" height="300" fill="#fdadbb"/><text x="330.60" y="926.17" text-anchor="middle" font-size="12" fill="#555" >1<tspan dx="1.3">058</tspan><tspan dx="1.3">322</tspan> €</text><text x="792.40" y="831.56" text-anchor="middle" font-size="12" fill="#555" >1<tspan dx="1.3">059</tspan><tspan dx="1.3">883</tspan> €</text><circle cx="906.9" cy="841.4" r="9.6" fill="#b8e1b6"/><text x="919.70" y="845.60" text-anchor="start" font-size="12" fill="#666" >Recettes</text><circle cx="906.9" cy="863.7" r="9.6" fill="#fdadbb"/><text x="919.70" y="867.90" text-anchor="start" font-size="12" fill="#666" >Dépenses</text><path d="M1078.70 822.50 H1777.50" stroke="#e5e5e5" stroke-width="1"/><text x="1078.30" y="825.90" text-anchor="end" font-size="12" fill="#666" >60k</text><path d="M1078.70 870.50 H1777.50" stroke="#e5e5e5" stroke-width="1"/><text x="1078.30" y="874.20" text-anchor="end" font-size="12" fill="#666" >40k</text><path d="M1078.70 918.50 H1777.50" stroke="#e5e5e5" stroke-width="1"/><text x="1078.30" y="922.50" text-anchor="end" font-size="12" fill="#666" >20k</text><path d="M1078.70 967.50 H1777.50" stroke="#b8b8b8" stroke-width="1"/><text x="1078.30" y="970.80" text-anchor="end" font-size="12" fill="#666" >0k</text><path d="M1078.70 1015.50 H1777.50" stroke="#e5e5e5" stroke-width="1"/><text x="1078.30" y="1019.10" text-anchor="end" font-size="12" fill="#666" >-20k</text><path d="M1078.70 1063.50 H1777.50" stroke="#e5e5e5" stroke-width="1"/><text x="1078.30" y="1067.40" text-anchor="end" font-size="12" fill="#666" >-40k</text><path d="M1088.50 822.30 V1085.00" stroke="#e2e2e2" stroke-width="1"/><clipPath id="cpos"><rect x="1088.7" y="700" width="687.8" height="267.20"/></clipPath><clipPath id="cneg"><rect x="1088.7" y="967.20" width="687.8" height="400"/></clipPath><path d="M1088.70 980.24 C1111.63 960.92 1125.89 926.94 1146.02 931.94 C1171.75 938.34 1176.42 999.04 1203.33 1008.74 C1222.27 1015.56 1238.47 988.52 1260.65 973.24 C1284.32 956.93 1299.47 951.24 1317.97 929.77 C1345.32 898.02 1363.73 817.90 1375.28 840.17 C1409.58 906.29 1407.49 1138.47 1432.60 1150.74 C1453.34 1160.88 1460.55 926.89 1489.92 896.20 C1506.40 878.97 1518.04 1012.14 1547.23 1030.96 C1563.90 1041.70 1578.43 990.02 1604.55 970.10 C1624.29 955.05 1639.31 942.63 1661.87 943.53 C1685.16 944.47 1694.82 966.99 1719.18 974.69 C1740.67 981.48 1753.57 977.73 1776.50 979.76 L1776.50 967.20 L1088.70 967.20 Z" fill="#b8e1b6" clip-path="url(#cpos)"/><path d="M1088.70 980.24 C1111.63 960.92 1125.89 926.94 1146.02 931.94 C1171.75 938.34 1176.42 999.04 1203.33 1008.74 C1222.27 1015.56 1238.47 988.52 1260.65 973.24 C1284.32 956.93 1299.47 951.24 1317.97 929.77 C1345.32 898.02 1363.73 817.90 1375.28 840.17 C1409.58 906.29 1407.49 1138.47 1432.60 1150.74 C1453.34 1160.88 1460.55 926.89 1489.92 896.20 C1506.40 878.97 1518.04 1012.14 1547.23 1030.96 C1563.90 1041.70 1578.43 990.02 1604.55 970.10 C1624.29 955.05 1639.31 942.63 1661.87 943.53 C1685.16 944.47 1694.82 966.99 1719.18 974.69 C1740.67 981.48 1753.57 977.73 1776.50 979.76 L1776.50 967.20 L1088.70 967.20 Z" fill="#fdadbb" clip-path="url(#cneg)"/><path d="M1088.70 980.24 C1111.63 960.92 1125.89 926.94 1146.02 931.94 C1171.75 938.34 1176.42 999.04 1203.33 1008.74 C1222.27 1015.56 1238.47 988.52 1260.65 973.24 C1284.32 956.93 1299.47 951.24 1317.97 929.77 C1345.32 898.02 1363.73 817.90 1375.28 840.17 C1409.58 906.29 1407.49 1138.47 1432.60 1150.74 C1453.34 1160.88 1460.55 926.89 1489.92 896.20 C1506.40 878.97 1518.04 1012.14 1547.23 1030.96 C1563.90 1041.70 1578.43 990.02 1604.55 970.10 C1624.29 955.05 1639.31 942.63 1661.87 943.53 C1685.16 944.47 1694.82 966.99 1719.18 974.69 C1740.67 981.48 1753.57 977.73 1776.50 979.76" fill="none" stroke="#989a96" stroke-width="2.6" stroke-linejoin="round"/><path d="M1785 837.6 H1801" stroke="#989a96" stroke-width="2.6"/><text x="1804.60" y="841.80" text-anchor="start" font-size="12" fill="#666" >Solde</text></svg>
</body></html>
